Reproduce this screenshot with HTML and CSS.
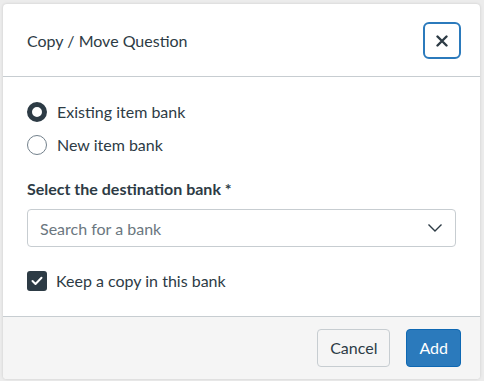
FILE: index.html
```html
<!DOCTYPE html>
<html lang="en">
<head>
<meta charset="utf-8">
<link rel="stylesheet" href="styles.css">
</head>
<body>
<div class="dialog">
  <header class="dialog-header">
    <h2 class="title">Copy / Move Question</h2>
    <button class="close" aria-label="Close">
      <svg width="12" height="12" viewBox="0 0 12 12"><path d="M1.5 1.5L10.5 10.5M10.5 1.5L1.5 10.5" stroke="#2d3b45" stroke-width="2.4" stroke-linecap="round"/></svg>
    </button>
  </header>
  <div class="dialog-body">
    <div class="radios">
      <label class="radio"><span class="dot checked"></span><span>Existing item bank</span></label>
      <label class="radio"><span class="dot"></span><span>New item bank</span></label>
    </div>
    <div class="field">
      <div class="field-label">Select the destination bank *</div>
      <div class="select">
        <span class="placeholder">Search for a bank</span>
        <svg width="16" height="10" viewBox="0 0 16 10"><path d="M1.5 1.5L8 8L14.5 1.5" fill="none" stroke="#2d3b45" stroke-width="1.4"/></svg>
      </div>
    </div>
    <label class="check">
      <span class="box"><svg width="12" height="10" viewBox="0 0 12 10"><path d="M1.5 5L4.5 8L10.5 1.8" fill="none" stroke="#fff" stroke-width="2" stroke-linecap="round" stroke-linejoin="round"/></svg></span>
      <span>Keep a copy in this bank</span>
    </label>
  </div>
  <footer class="dialog-footer">
    <button class="btn btn-default">Cancel</button>
    <button class="btn btn-primary">Add</button>
  </footer>
</div>
</body>
</html>
```
FILE: styles.css
```css
html, body {
  margin: 0;
  padding: 0;
}
body {
  background: #ececec;
  font-family: Lato, "Noto Sans", sans-serif;
  color: #2d3b45;
  padding: 4px 4px 2px 3px;
  height: 381px;
  box-sizing: border-box;
}
.dialog {
  background: #fff;
  border-radius: 4px;
  height: 375px;
  display: flex;
  flex-direction: column;
  box-shadow: 0 0 3px rgba(0,0,0,0.15);
  overflow: hidden;
}
.dialog-header {
  height: 73px;
  box-sizing: border-box;
  border-bottom: 1px solid #c7cdd1;
  display: flex;
  align-items: center;
  justify-content: space-between;
  padding: 0 19px 0 24px;
}
.title {
  margin: 0;
  font-size: 16px;
  font-weight: 400;
}
.close {
  width: 38px;
  height: 37px;
  border: 2px solid #2b7abc;
  border-radius: 6px;
  background: #fff;
  display: flex;
  align-items: center;
  justify-content: center;
  padding: 0;
  margin-top: 1px;
}
.dialog-body {
  flex: 1;
  padding: 25px 24px 0 24px;
  display: flex;
  flex-direction: column;
}
.radios {
  display: flex;
  flex-direction: column;
  gap: 13px;
}
.radio {
  display: flex;
  align-items: center;
  gap: 10px;
  font-size: 16px;
  line-height: 20px;
}
.dot {
  width: 20px;
  height: 20px;
  box-sizing: border-box;
  border-radius: 50%;
  border: 1px solid #73818c;
  background: #fff;
}
.dot.checked {
  border: 5px solid #2d3b45;
}
.field {
  margin-top: 24px;
}
.field-label {
  font-weight: 700;
  font-size: 16px;
  line-height: 20px;
  margin-bottom: 10px;
}
.select {
  height: 38px;
  box-sizing: border-box;
  border: 1px solid #c7cdd1;
  border-radius: 4px;
  display: flex;
  align-items: center;
  justify-content: space-between;
  padding: 0 12px;
}
.placeholder {
  color: #6b7780;
  font-size: 16px;
}
.check {
  margin-top: 24px;
  display: flex;
  align-items: center;
  gap: 9px;
  font-size: 16px;
  line-height: 20px;
}
.box {
  width: 20px;
  height: 20px;
  border-radius: 3px;
  background: #2d3b45;
  display: flex;
  align-items: center;
  justify-content: center;
}
.dialog-footer {
  height: 63px;
  box-sizing: border-box;
  background: #f5f5f5;
  border-top: 1px solid #c7cdd1;
  display: flex;
  align-items: center;
  justify-content: flex-end;
  gap: 16px;
  padding: 0 19px 1px 0;
}
.btn {
  height: 38px;
  box-sizing: border-box;
  border-radius: 4px;
  font-family: Lato, "Noto Sans", sans-serif;
  font-size: 16px;
  padding: 0 12px;
}
.btn-default {
  background: #f5f5f5;
  border: 1px solid #c7cdd1;
  color: #2d3b45;
}
.btn-primary {
  background: #2b7abc;
  border: 1px solid #0e68b3;
  color: #fff;
}
```
